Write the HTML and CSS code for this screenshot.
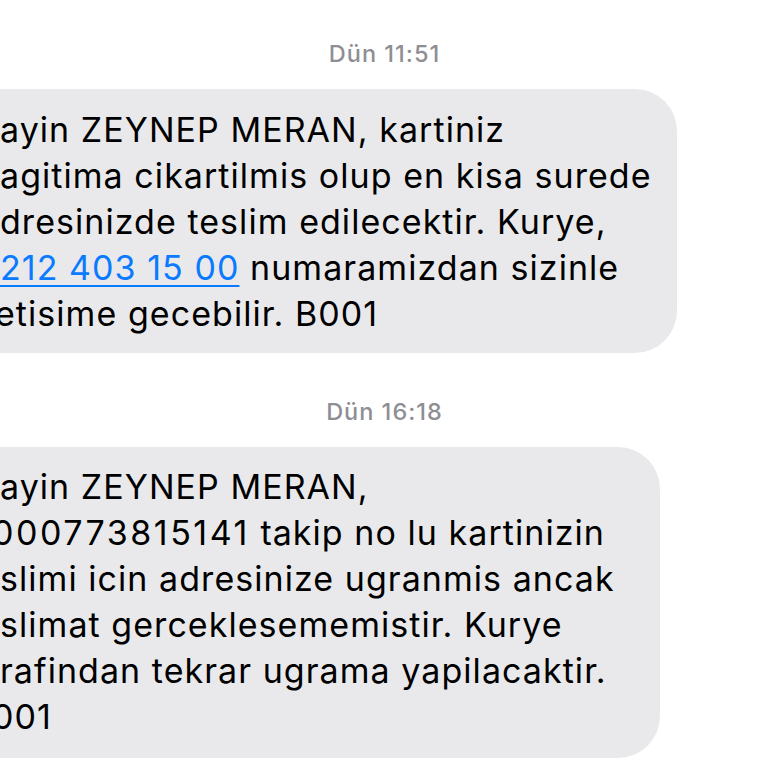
FILE: index.html
```html
<!DOCTYPE html>
<html lang="tr">
<head>
<meta charset="utf-8">
<title>Mesajlar</title>
<link rel="stylesheet" href="styles.css">
</head>
<body>
<main class="thread">
  <div class="stamp">Dün 11:51</div>
  <div class="bubble b1">
    <span class="ln">ayin ZEYNEP MERAN, kartiniz</span>
    <span class="ln">agitima cikartilmis olup en kisa surede</span>
    <span class="ln">dresinizde teslim edilecektir. Kurye,</span>
    <span class="ln"><a class="phone" href="#">212 403 15 00</a> numaramizdan sizinle</span>
    <span class="ln cut-s">etisime gecebilir. B001</span>
  </div>
  <div class="stamp stamp2">Dün 16:18</div>
  <div class="bubble b2">
    <span class="ln">ayin ZEYNEP MERAN,</span>
    <span class="ln cut-m"><span class="num">000773815141</span> takip no lu kartinizin</span>
    <span class="ln">slimi icin adresinize ugranmis ancak</span>
    <span class="ln">slimat gerceklesememistir. Kurye</span>
    <span class="ln">rafindan tekrar ugrama yapilacaktir.</span>
    <span class="ln cut-m">001</span>
  </div>
</main>
</body>
</html>
```
FILE: styles.css
```css
html, body {
  margin: 0;
  padding: 0;
  background: #ffffff;
}
body {
  width: 768px;
  height: 768px;
  overflow: hidden;
  font-family: Inter, "Noto Sans", "Liberation Sans", sans-serif;
}
.thread {
  display: flex;
  flex-direction: column;
  align-items: flex-start;
  padding-top: 42px;
}
.stamp {
  align-self: stretch;
  text-align: center;
  font-size: 23.5px;
  line-height: 24px;
  font-weight: 500;
  letter-spacing: 1px;
  color: #8e8e93;
  margin-bottom: 23px;
  padding-left: 1px;
}
.stamp2 {
  margin-top: 47px;
  margin-bottom: 23px;
}
.bubble {
  background: #e9e9eb;
  border-radius: 0 42px 42px 0;
  padding: 18px 0 16px 0;
  font-size: 34px;
  line-height: 46px;
  letter-spacing: 1.05px;
  color: #000000;
  box-sizing: border-box;
}
.b1 { width: 677px; }
.b2 { width: 660px; padding-top: 17px; padding-bottom: 18px; }
.ln {
  display: block;
  white-space: nowrap;
}
.num { letter-spacing: 2.5px; }
.cut-s { text-indent: -5px; }
.cut-m { text-indent: -8px; }
.phone {
  color: #0a7aff;
  text-decoration: underline;
  text-decoration-thickness: 2px;
  text-underline-offset: 5px;
}
```
